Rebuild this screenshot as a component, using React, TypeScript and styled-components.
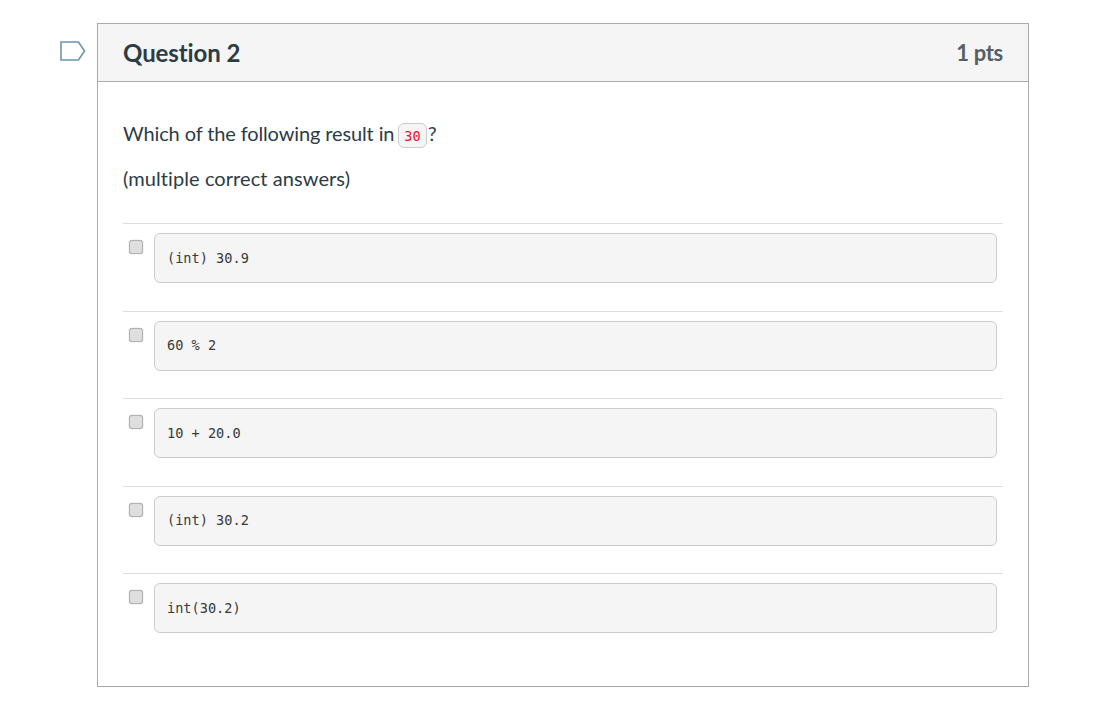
import { createGlobalStyle } from "styled-components";
import styled from "styled-components";

const GlobalStyle = createGlobalStyle`
    html, body {
        margin: 0;
        padding: 0;
        background: #fff;
        font-family: Lato, "Open Sans", sans-serif;
        color: #2d3b45;
        font-variant-ligatures: none;
    }
`;

const Page = styled.div`
    display: flex;
    align-items: flex-start;
    padding: 23px 0 0 60px;
    height: 690px;
`;

const FlagIcon = styled.svg`
    width: 26px;
    height: 20px;
    margin: 18px 11px 0 0;
    flex: none;
`;

const Card = styled.div`
    width: 932px;
    height: 664px;
    box-sizing: border-box;
    border: 1px solid #aaa;
`;

const Header = styled.div`
    display: flex;
    justify-content: space-between;
    align-items: center;
    height: 58px;
    box-sizing: border-box;
    padding: 0 25px;
    background: #f5f5f5;
    border-bottom: 1px solid #aaa;
`;

const Title = styled.h2`
    margin: 0;
    font-size: 24px;
    font-weight: 700;
    letter-spacing: -0.1px;
`;

const Points = styled.span`
    font-size: 22px;
    font-weight: 700;
    letter-spacing: -0.3px;
    color: #555f66;
`;

const Body = styled.div`
    padding: 39px 25px 0;
`;

const Text = styled.p<{ $tracking: number }>`
    margin: 0 0 20px;
    height: 25px;
    font-size: 20px;
    line-height: 25px;
    letter-spacing: ${(p) => p.$tracking}px;
`;

const InlineCode = styled.code`
    display: inline-block;
    box-sizing: border-box;
    height: 25px;
    padding: 0 5px;
    margin: 0 1px 0 4px;
    font-family: "DejaVu Sans Mono", "Liberation Mono", monospace;
    font-size: 13.6px;
    line-height: 25px;
    letter-spacing: 0;
    vertical-align: middle;
    color: #f0102c;
    background: #f5f5f5;
    border: 1px solid #ccc;
    border-radius: 6px;
`;

const AnswerList = styled.div`
    margin-top: 19px;
    padding-top: 12px;
`;

const Answer = styled.div`
    display: flex;
    align-items: flex-start;
    box-sizing: border-box;
    height: 87.5px;
    padding: 9px 6px 0 6px;
    border-top: 1px solid #ddd;
`;

const Check = styled.span`
    flex: none;
    width: 12px;
    height: 12px;
    margin: 7px 11px 0 0;
    background: #dedede;
    border: 1px solid #b0b0b0;
    border-radius: 3px;
    box-shadow: 0 0 1px #999;
`;

const Code = styled.pre`
    flex: 1;
    margin: 0;
    height: 50px;
    box-sizing: border-box;
    padding: 0.6px 12px 0;
    font-family: "DejaVu Sans Mono", "Liberation Mono", monospace;
    font-size: 13.6px;
    line-height: 47.5px;
    color: #3a3a3a;
    background: #f5f5f5;
    border: 1px solid #ccc;
    border-radius: 6px;
`;

const answers = ["(int) 30.9", "60 % 2", "10 + 20.0", "(int) 30.2", "int(30.2)"];

export default function App() {
    return (
        <Page>
            <GlobalStyle />
            <FlagIcon viewBox="0 0 26 20">
                <path d="M1 1 H18.5 L24.5 10 L18.5 19 H1 Z" fill="none" stroke="#6b95ad" strokeWidth="1.6" />
            </FlagIcon>
            <Card>
                <Header>
                    <Title>Question 2</Title>
                    <Points>1 pts</Points>
                </Header>
                <Body>
                    <Text $tracking={-0.125}>
                        Which of the following result in<InlineCode>30</InlineCode>?
                    </Text>
                    <Text $tracking={0.08}>(multiple correct answers)</Text>
                    <AnswerList>
                        {answers.map((answer) => (
                            <Answer key={answer}>
                                <Check />
                                <Code>{answer}</Code>
                            </Answer>
                        ))}
                    </AnswerList>
                </Body>
            </Card>
        </Page>
    );
}
